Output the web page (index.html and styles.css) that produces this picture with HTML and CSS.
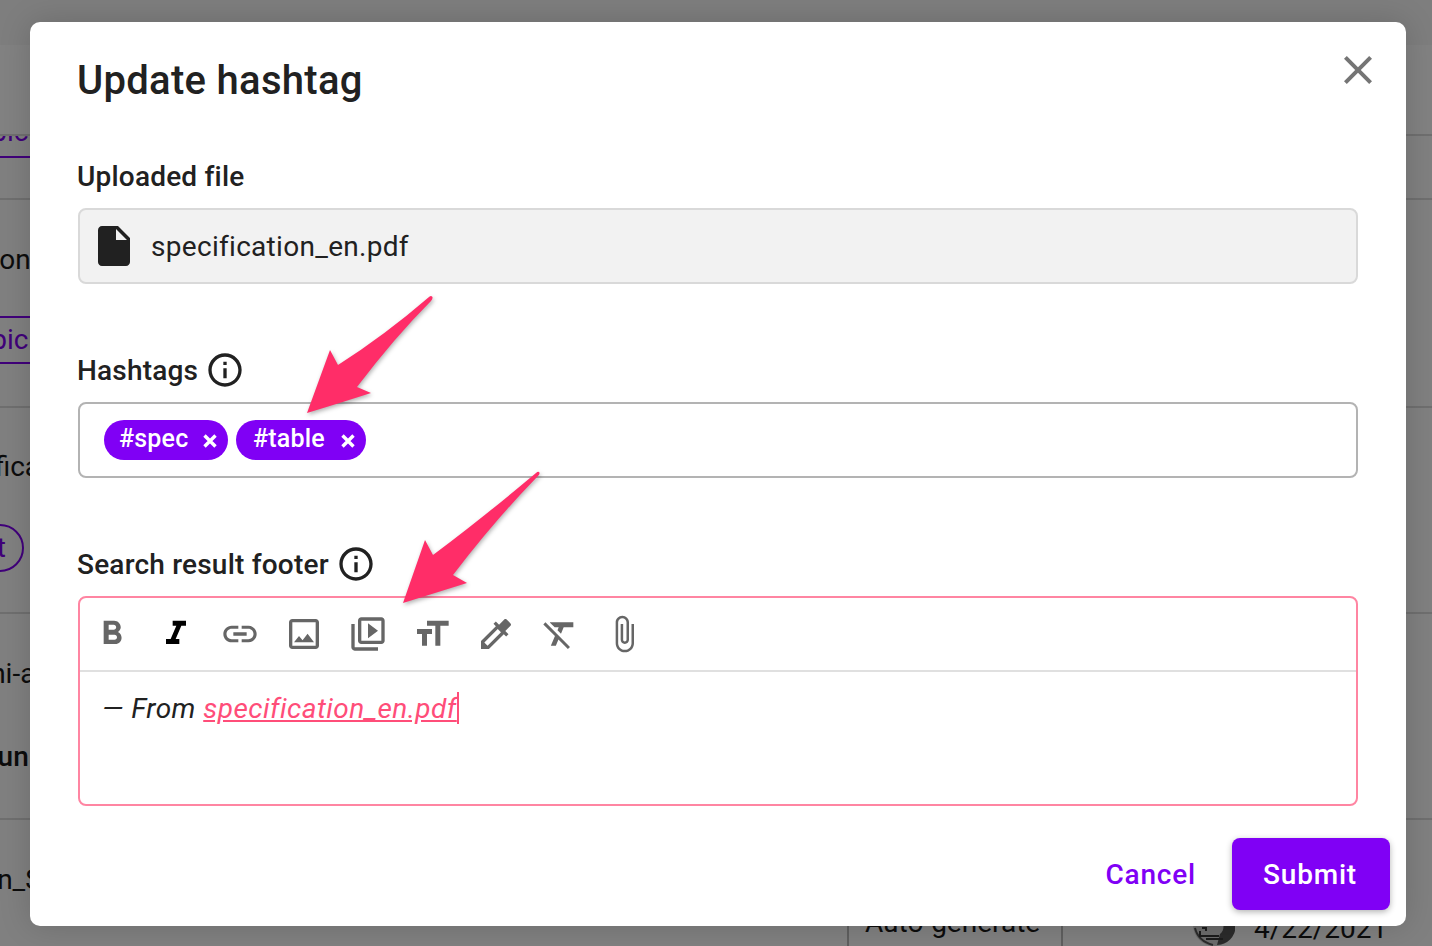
FILE: index.html
```html
<!DOCTYPE html>
<html lang="en">
<head>
<meta charset="utf-8">
<title>Update hashtag</title>
<link rel="stylesheet" href="styles.css">
</head>
<body>
<div class="page">
  <div class="topbar"></div>
  <div class="subbar"></div>
  <div class="row row-a"><span class="chip chip-first">Topic</span></div>
  <div class="row row-b">
    <span class="cut cut-on">Common</span>
    <span class="chip chip-second">Topic</span>
  </div>
  <div class="row row-c">
    <span class="cut cut-fica">Specification</span>
    <span class="pill">Text</span>
  </div>
  <div class="row row-d">
    <span class="cut cut-nia">Uni-app</span>
    <span class="cut cut-un strong">Run</span>
  </div>
  <div class="row row-e">
    <span class="cut cut-ns">Sign_Spec</span>
    <div class="cells">
      <span class="cell cell-auto">Auto-generate</span>
      <span class="cell cell-meta">
        <svg class="avatar" viewBox="0 0 42 42">
          <circle cx="21" cy="21" r="21" fill="#6c6c6c"/>
          <path d="M24 4A18 18 0 0 1 24 41L27 30Q34 24 27 12z" fill="#2b2b2b"/>
          <path d="M2 24Q5 37 20 41" fill="none" stroke="#2b2b2b" stroke-width="2"/>
          <path d="M7 27v5H26M13 35H30M9 24h4v3" fill="none" stroke="#1c1c1c" stroke-width="2"/>
        </svg>
        <span class="date">4/22/2021</span>
      </span>
    </div>
  </div>

  <section class="modal">
    <header class="modal-head">
      <h1 class="modal-title">Update hashtag</h1>
      <svg class="close" viewBox="0 0 24 24"><path d="M19 6.41L17.59 5 12 10.59 6.41 5 5 6.41 10.59 12 5 17.59 6.41 19 12 13.41 17.59 19 19 17.59 13.41 12z"/></svg>
    </header>

    <div class="label label-file">Uploaded file</div>
    <div class="box file-box">
      <svg class="file-icon" viewBox="0 0 24 24"><path d="M6 2c-1.1 0-1.99.9-1.99 2L4 20c0 1.1.89 2 1.99 2H18c1.1 0 2-.9 2-2V8l-6-6H6zm7 7V3.5L18.5 9H13z"/></svg>
      <span class="file-name">specification_en.pdf</span>
    </div>

    <div class="label label-gap">Hashtags
      <svg class="info" viewBox="0 0 24 24"><path d="M11 7h2v2h-2zm0 4h2v6h-2zm1-9C6.48 2 2 6.48 2 12s4.48 10 10 10 10-4.48 10-10S17.52 2 12 2zm0 18c-4.41 0-8-3.59-8-8s3.59-8 8-8 8 3.59 8 8-3.59 8-8 8z"/></svg>
    </div>
    <div class="box tag-box">
      <span class="tag tag-spec"><span class="tag-name">#spec</span><svg class="tag-x" viewBox="0 0 14 14"><path d="M1.500 1.500l11 11M12.500 1.500l-11 11"/></svg></span>
      <span class="tag tag-table"><span class="tag-name">#table</span><svg class="tag-x" viewBox="0 0 14 14"><path d="M1.500 1.500l11 11M12.500 1.500l-11 11"/></svg></span>
    </div>

    <div class="label label-gap">Search result footer
      <svg class="info" viewBox="0 0 24 24"><path d="M11 7h2v2h-2zm0 4h2v6h-2zm1-9C6.48 2 2 6.48 2 12s4.48 10 10 10 10-4.48 10-10S17.52 2 12 2zm0 18c-4.41 0-8-3.59-8-8s3.59-8 8-8 8 3.59 8 8-3.59 8-8 8z"/></svg>
    </div>
    <div class="editor">
      <div class="toolbar">
        <svg class="tool" viewBox="0 0 24 24"><path d="M15.6 10.79c.97-.67 1.65-1.77 1.65-2.79 0-2.26-1.75-4-4-4H7v14h7.04c2.09 0 3.71-1.7 3.71-3.79 0-1.52-.86-2.82-2.15-3.42zM10 6.5h3c.83 0 1.5.67 1.5 1.5s-.67 1.5-1.5 1.5h-3v-3zm3.5 9H10v-3h3.500c.83 0 1.500.67 1.500 1.500s-.67 1.500-1.500 1.500z"/></svg>
        <svg class="tool tool-on" viewBox="0 0 24 24"><path d="M10 4v3h2.21l-3.42 8H6v3h8v-3h-2.21l3.42-8H18V4z"/></svg>
        <svg class="tool" viewBox="0 0 24 24"><path d="M3.900 12c0-1.710 1.390-3.100 3.100-3.100h4V7H7c-2.760 0-5 2.240-5 5s2.240 5 5 5h4v-1.900H7c-1.710 0-3.100-1.390-3.100-3.100zM8 13h8v-2H8v2zm9-6h-4v1.900h4c1.710 0 3.100 1.390 3.100 3.100s-1.390 3.100-3.100 3.100h-4V17h4c2.760 0 5-2.240 5-5s-2.240-5-5-5z"/></svg>
        <svg class="tool" viewBox="0 0 24 24"><path d="M19 5v14H5V5h14m0-2H5c-1.100 0-2 .9-2 2v14c0 1.100.9 2 2 2h14c1.100 0 2-.9 2-2V5c0-1.100-.9-2-2-2zm-4.860 8.860l-3 3.870L9 13.140 6 17h12l-3.860-5.140z"/></svg>
        <svg class="tool" viewBox="0 0 24 24"><path d="M4 6H2v14c0 1.100.9 2 2 2h14v-2H4V6zm16-4H8c-1.100 0-2 .9-2 2v12c0 1.100.9 2 2 2h12c1.100 0 2-.9 2-2V4c0-1.100-.9-2-2-2zm0 14H8V4h12v12zM12 5.500v9l6-4.500z"/></svg>
        <svg class="tool" viewBox="0 0 24 24"><path d="M9 4v3h5v12h3V7h5V4H9zm-6 8h3v7h3v-7h3V9H3v3z"/></svg>
        <svg class="tool" viewBox="0 0 24 24"><path d="M20.710 5.630l-2.340-2.340c-.39-.39-1.020-.39-1.410 0l-3.120 3.120-1.930-1.910-1.410 1.410 1.420 1.420L3 16.250V21h4.750l8.920-8.920 1.420 1.420 1.410-1.410-1.920-1.920 3.120-3.120c.4-.4.4-1.030.01-1.420zM6.920 19L5 17.080l8.060-8.060 1.920 1.920L6.920 19z"/></svg>
        <svg class="tool" viewBox="0 0 24 24"><path d="M3.270 5L2 6.270l6.970 6.970L6.500 19h3l1.570-3.660L16.730 21 18 19.730 3.550 5.270 3.270 5zM6 5v.18L8.820 8h2.400l-.72 1.680 2.100 2.100L14.210 8H20V5H6z"/></svg>
        <svg class="tool" viewBox="0 0 24 24"><path d="M16.500 6v11.500c0 2.210-1.790 4-4 4s-4-1.790-4-4V5c0-1.380 1.120-2.500 2.500-2.500s2.500 1.120 2.500 2.500v10.500c0 .55-.45 1-1 1s-1-.45-1-1V6H10v9.500c0 1.380 1.120 2.500 2.500 2.500s2.500-1.120 2.500-2.500V5c0-2.210-1.790-4-4-4S7 2.790 7 5v12.500c0 3.040 2.460 5.500 5.500 5.500s5.500-2.460 5.500-5.500V6h-1.500z"/></svg>
      </div>
      <div class="editor-text"><em>— From <a class="editor-link">specification_en.pdf</a></em><span class="caret"></span></div>
    </div>

    <footer class="modal-foot">
      <span class="cancel">Cancel</span>
      <span class="submit">Submit</span>
    </footer>
  </section>

  <svg class="arrows" viewBox="0 0 1432 946">
    <path class="arrow" d="M432 296.500Q433.500 298 431 301Q395 337 357 387L371 393Q340 403 307 413L330 350L338 365Q385 335 429 297Q431 295.500 432 296.500z"/>
    <path class="arrow" d="M539 472Q540.500 473.500 538 476Q495 520 453 575L467 583Q435 593 403 603L425 540L433 555Q480 520 536 473Q538 471 539 472z"/>
  </svg>
</div>
</body>
</html>
```
FILE: styles.css
```css
* { box-sizing: border-box; }
html, body { margin: 0; padding: 0; }
body { font-family: Roboto, "Liberation Sans", sans-serif; color: #212121; }

.page {
  position: relative;
  width: 1432px;
  height: 946px;
  overflow: hidden;
  background: #808080;
  color: #0c0c0c;
  font-size: 28px;
  line-height: 36px;
}

.topbar { height: 45px; background: #7e7e7e; }
.subbar { height: 91px; background: #828282; border-bottom: 2px solid #6f6f6f; }

.row { position: relative; overflow: hidden; border-bottom: 2px solid #6f6f6f; display: flex; flex-direction: column; align-items: flex-start; }
.row-a { height: 64px; }
.row-b { height: 208px; }
.row-c { height: 206px; }
.row-d { height: 206px; }
.row-e { height: 126px; border-bottom: 0; }

.chip { display: block; border: 2px solid #40007a; border-width: 2px 0; height: 48px; line-height: 44px; color: #40007a; margin-left: -40px; white-space: nowrap; width: 70px; }
.chip-first { margin-top: -26px; border-top: 0; }
.chip-second { margin-top: 38px; }
.row-b .cut-on { margin-top: 42px; }
.cut { display: block; white-space: nowrap; }
.cut-on { margin-left: -84px; }
.cut-fica { margin-top: 41px; margin-left: -74px; }
.cut-nia { margin-top: 42px; margin-left: -28px; }
.cut-un { margin-top: 47px; margin-left: -20px; }
.cut-ns { margin-top: 42px; margin-left: -42px; }
.strong { font-weight: 500; }
.pill { display: block; height: 48px; width: 100px; margin: 39px 0 0 -76px; border: 2px solid #40007a; border-radius: 24px; color: #40007a; line-height: 44px; text-align: right; padding-right: 16px; }

.cells { display: flex; position: absolute; left: 847px; top: 0; height: 126px; }
.cell { display: flex; border-left: 2px solid #5f5f5f; }
.cell-auto { width: 214px; padding: 85px 0 0 16px; }
.cell-meta { padding: 84px 0 0 130px; }
.avatar { width: 42px; height: 42px; flex: none; }
.date { margin: 7px 0 0 19px; white-space: nowrap; }

/* dialog */
.modal {
  position: absolute;
  left: 30px;
  top: 22px;
  width: 1376px;
  height: 904px;
  padding: 34px 48px 16px;
  background: #fff;
  border-radius: 10px;
  color: #212121;
  box-shadow: 0 0 32px rgba(0, 0, 0, .16);
}

.modal-head { display: flex; justify-content: space-between; align-items: flex-start; height: 48px; }
.modal-title { margin: 1px 0 0 -1px; font-size: 40px; line-height: 48px; font-weight: 500; letter-spacing: .3px; }
.close { width: 48px; height: 48px; margin: -10px -24px 0 0; fill: #757575; }

.label { display: flex; align-items: center; gap: 7px; height: 36px; margin-bottom: 14px; margin-left: -1px; padding-top: 2px; font-size: 28px; font-weight: 500; letter-spacing: .2px; }
.label-file { margin-top: 54px; }
.label-gap { margin-top: 68px; }
.info { width: 40px; height: 40px; margin-top: -2px; fill: #212121; flex: none; }

.box { display: flex; align-items: center; height: 76px; border-radius: 8px; border: 2px solid; }
.file-box { background: #f2f2f2; border-color: #d9d9d9; padding-left: 10px; gap: 13px; font-size: 28px; }
.file-name { padding-top: 2px; letter-spacing: .3px; }
.file-icon { width: 48px; height: 48px; fill: #212121; flex: none; }
.tag-box { border-color: #b3b3b3; padding-left: 24px; gap: 8px; }

.tag { display: flex; align-items: center; justify-content: space-between; height: 40px; border-radius: 20px; background: #8000f5; color: #fff; font-size: 25px; font-weight: 500; line-height: 36px; }
.tag-name { padding-bottom: 2px; letter-spacing: .2px; }
.tag-spec { width: 124px; padding: 0 11px 0 15px; }
.tag-table { width: 130px; padding: 0 11px 0 17px; }
.tag-x { width: 14px; height: 14px; stroke: #fff; stroke-width: 3.4; fill: none; flex: none; margin-top: 1px; }

.editor { height: 210px; border: 2px solid #ff85a2; border-radius: 8px; }
.toolbar { display: flex; align-items: center; gap: 24px; height: 74px; padding: 0 0 0 12px; border-bottom: 2px solid #e0e0e0; }
.tool { width: 40px; height: 40px; fill: #666; flex: none; }
.tool-on { fill: #000; }
.editor-text { display: flex; padding: 17px 22px; font-size: 28px; line-height: 40px; letter-spacing: .46px; }
.editor-link { color: #ff4d79; text-decoration: underline; }
.caret { width: 2px; height: 32px; margin-top: 3px; background: #ff4d79; }

.modal-foot { display: flex; justify-content: flex-end; align-items: center; gap: 36px; height: 72px; margin: 32px -32px 0 0; font-size: 28px; font-weight: 500; letter-spacing: .8px; }
.cancel { color: #8000f5; padding-top: 2px; }
.submit { display: flex; align-items: center; justify-content: center; width: 158px; height: 72px; padding: 2px 2px 0 0; border-radius: 8px; background: #8000f5; color: #fff; box-shadow: 0 2px 6px rgba(0, 0, 0, .3); }

/* annotations */
.arrows { position: absolute; left: 0; top: 0; width: 1432px; height: 946px; pointer-events: none; }
.arrow { fill: #ff2d68; filter: drop-shadow(1px 2px 2px rgba(0, 0, 0, .3)); }
```
